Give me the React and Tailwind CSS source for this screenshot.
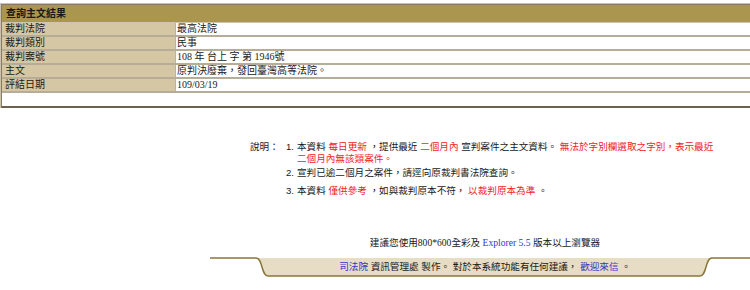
import React from "react";

const rows = [
  { label: "裁判法院", value: "最高法院" },
  { label: "裁判類別", value: "民事" },
  { label: "裁判案號", value: "108 年 台上 字 第 1946號" },
  { label: "主文", value: "原判決廢棄，發回臺灣高等法院。" },
  { label: "評結日期", value: "109/03/19" },
];

const cjk = { fontFamily: '"Liberation Serif", "Noto Sans CJK TC", serif' };
const sans = { fontFamily: '"Liberation Sans", "Noto Sans CJK TC", sans-serif' };

const Red = ({ children }) => <span className="text-[#f02424]">{children}</span>;
const Blue = ({ children }) => <span className="text-[#3434c8]">{children}</span>;

export default function App() {
  return (
    <div className="w-[750px] h-[290px] bg-white overflow-hidden text-[10px] text-[#1a1a1a]" style={cjk}>
      {/* 查詢結果表格 */}
      <div className="mt-[3px] border-t border-l border-[#cbc3ae]">
        <div className="border-t border-l border-[#877c62] border-b-2 border-b-[#6d624d]">
          <div className="h-[18px] bg-[#ab9650] flex items-center pl-[4px] font-bold border-b border-[#cfc6ad]">
            查詢主文結果
          </div>
          {rows.map((r) => (
            <div key={r.label} className="grid grid-cols-[174px_1fr] h-[14px] border-b-2 border-[#b6ac97]">
              <div className="bg-[#d5c7a4] pl-[3px] leading-[12px] border-r border-[#bdb39c]">{r.label}</div>
              <div className="bg-white pl-[1px] leading-[12px]">{r.value}</div>
            </div>
          ))}
          <div className="h-[13px] bg-white"></div>
        </div>
      </div>

      {/* 說明 */}
      <div className="mt-[33px] pl-[250px] flex leading-[12px] text-[9.6px]" style={sans}>
        <div className="w-[36px]">說明：</div>
        <div>
          <div className="flex">
            <span className="w-[11px]">1.</span>
            <span className="whitespace-nowrap">
              本資料 <Red>每日更新</Red> ，提供最近 <Red>二個月內</Red> 宣判案件之主文資料。 <Red>無法於字別欄選取之字別，表示最近</Red>
              <br />
              <Red>二個月內無該類案件。</Red>
            </span>
          </div>
          <div className="flex mt-[2px]">
            <span className="w-[11px]">2.</span>
            <span>宣判已逾二個月之案件，請逕向原裁判書法院查詢。</span>
          </div>
          <div className="flex mt-[6px]">
            <span className="w-[11px]">3.</span>
            <span>
              本資料 <Red>僅供參考</Red> ，如與裁判原本不符， <Red>以裁判原本為準</Red> 。
            </span>
          </div>
        </div>
      </div>

      {/* 瀏覽器建議 */}
      <div className="mt-[40px] ml-[210px] w-[550px] text-center leading-[12px] text-[9.6px]">
        建議您使用800*600全彩及 <Blue>Explorer 5.5</Blue> 版本以上瀏覽器
      </div>

      {/* 頁尾 */}
      <div className="relative mt-[7px] ml-[210px] w-[540px] h-[22px] flex items-center justify-center">
        <svg className="absolute inset-0" width="540" height="22" viewBox="0 0 540 22">
          <path d="M46 2 C53 2 51 20 58 20 L490 20 C497 20 495 2 502 2 Z" fill="#e7ddc4" />
          <path
            d="M0 2 L46 2 C53 2 51 20 58 20 L490 20 C497 20 495 2 502 2 L540 2"
            fill="none"
            stroke="#8a773a"
            strokeWidth="1.5"
          />
        </svg>
        <div className="relative leading-[12px] pl-[10px] text-[9.6px]" style={sans}>
          <Blue>司法院</Blue> 資訊管理處 製作。 對於本系統功能有任何建議， <Blue>歡迎來信</Blue> 。
        </div>
      </div>
    </div>
  );
}
